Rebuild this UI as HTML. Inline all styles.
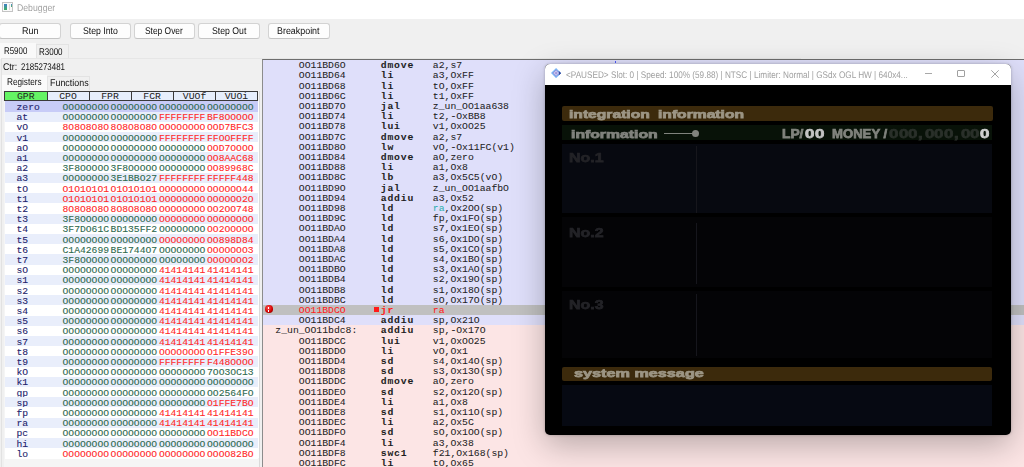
<!DOCTYPE html><html><head><meta charset='utf-8'><style>
*{margin:0;padding:0;box-sizing:border-box}
html,body{width:1024px;height:467px;overflow:hidden;background:#f0f0f0;position:relative}
div,span{position:absolute}
.t{font-family:"Liberation Sans",sans-serif;white-space:pre;transform-origin:0 0;line-height:1}
.m{font-family:"Liberation Mono",monospace;white-space:pre;line-height:1;font-size:9.77px}
.btn{background:#fdfdfd;border:1px solid #d3d3d3;border-bottom-color:#c4c4c4;border-radius:3px;top:22.6px;height:16.3px}
.btn .t{font-size:9.5px;color:#1a1a1a;top:3.6px;left:0;right:0;text-align:center;transform:scaleX(.88);transform-origin:50% 0}
.hc{top:91.2px;height:9.6px;background:#e6eefc;border:1px solid #3a3a3a;border-left:none}
.hc span{left:0;right:0;text-align:center;top:-0.6px;color:#222}
.row{left:4.5px;width:253.5px;height:10.7px}
.g{color:#2f6a50}
.r{color:#ff2a2a}
.nm{color:#24246c;left:12px;top:1.7px}
.rm{font-size:9.7px;-webkit-text-stroke:.1px currentColor}
.cy{position:static;color:#30b0b0}
.dr{left:263px;right:0;height:10.2px}
.dr .m{top:1.3px;color:#1e1e1e;-webkit-text-stroke:.05px currentColor}
.ad{left:35.8px}
.op{left:117.8px;font-weight:bold;letter-spacing:.8px;color:#111;-webkit-text-stroke:.3px currentColor}
.ar{left:169.8px}
.gt{font-family:"Liberation Sans",sans-serif;font-weight:bold;white-space:pre;line-height:1;transform-origin:0 0;-webkit-text-stroke:.75px currentColor;filter:blur(.35px)}
</style></head><body>
<div style='left:0;top:0;width:1024px;height:19px;background:#fff'></div>
<div style='left:2.1px;top:2.1px;width:10.7px;height:9.7px;border:1px solid #c4c4c4;background:#fafafa'><div style='left:0.6px;top:1px;width:3.4px;height:5.7px;background:linear-gradient(#3f7fc8,#3fb060)'></div><div style='left:5.6px;top:1px;width:0.9px;height:5.7px;background:#d8d8d8'></div><div style='left:8px;top:1.4px;width:1.2px;height:2.5px;background:linear-gradient(#4a8ad0,#50b060)'></div></div>
<span class=t style='left:17.3px;top:4px;font-size:9.8px;color:#a4a4a4;text-rendering:geometricPrecision;transform:scaleX(0.8878);'>Debugger</span>
<div class=btn style='left:-1px;width:62.3px'></div>
<div class=btn style='left:69.6px;width:61.80000000000001px'></div>
<div class=btn style='left:133.8px;width:61.69999999999999px'></div>
<div class=btn style='left:198px;width:62px'></div>
<div class=btn style='left:267.6px;width:62.599999999999966px'></div>
<span class=t style='left:22.2px;top:27px;font-size:9.8px;color:#111;text-rendering:geometricPrecision;transform:scaleX(0.9184);'>Run</span>
<span class=t style='left:82.7px;top:27px;font-size:9.8px;color:#111;text-rendering:geometricPrecision;transform:scaleX(0.8878);'>Step Into</span>
<span class=t style='left:145.4px;top:27px;font-size:9.8px;color:#111;text-rendering:geometricPrecision;transform:scaleX(0.8571);'>Step Over</span>
<span class=t style='left:211.5px;top:27px;font-size:9.8px;color:#111;text-rendering:geometricPrecision;transform:scaleX(0.8878);'>Step Out</span>
<span class=t style='left:277.4px;top:27px;font-size:9.8px;color:#111;text-rendering:geometricPrecision;transform:scaleX(0.9082);'>Breakpoint</span>
<div style='left:0;top:42.5px;width:35.5px;height:16px;background:#f9f9f9'></div>
<div style='left:36px;top:43.5px;width:32.5px;height:15px;background:#f0f0f0;border:1px solid #e3e3e3;border-bottom:none'></div>
<div style='left:1.3px;top:58px;width:800px;height:420px;border-left:1px solid #e2e2e2;border-top:1px solid #e6e6e6;background:#f0f0f0'></div>
<span class=t style='left:4.3px;top:46.5px;font-size:9.8px;color:#111;text-rendering:geometricPrecision;transform:scaleX(0.8061);'>R5900</span>
<span class=t style='left:39px;top:47.5px;font-size:9.8px;color:#111;text-rendering:geometricPrecision;transform:scaleX(0.8163);'>R3000</span>
<span class=t style='left:2.9px;top:62.6px;font-size:9.8px;color:#111;text-rendering:geometricPrecision;transform:scaleX(0.8980);'>Ctr:</span>
<span class=t style='left:21px;top:62.6px;font-size:9.8px;color:#111;text-rendering:geometricPrecision;transform:scaleX(0.8061);'>2185273481</span>
<div style='left:2px;top:75px;width:44.5px;height:15.5px;background:#fafafa'></div>
<div style='left:46.5px;top:75.8px;width:43.5px;height:14.7px;background:#f0f0f0;border:1px solid #e3e3e3;border-bottom:none'></div>
<span class=t style='left:7.3px;top:78px;font-size:9.8px;color:#111;text-rendering:geometricPrecision;transform:scaleX(0.8367);'>Registers</span>
<span class=t style='left:50.3px;top:79px;font-size:9.8px;color:#111;text-rendering:geometricPrecision;transform:scaleX(0.9082);'>Functions</span>
<div style='left:4px;top:91px;width:255px;height:376px;background:#f5f5f5'></div>
<div style='left:4.5px;top:101px;width:254px;height:357px;background:#fff'></div>
<div style='left:259.3px;top:91px;width:1px;height:376px;background:#dadada'></div>
<div class=hc style='left:4.0px;width:43.5px;background:#64f464;border-left:1px solid #3a3a3a;'><span class=m>GPR</span></div>
<div class=hc style='left:47.5px;width:42.0px;'><span class=m>CPO</span></div>
<div class=hc style='left:89.5px;width:42.0px;'><span class=m>FPR</span></div>
<div class=hc style='left:131.5px;width:42.30000000000001px;'><span class=m>FCR</span></div>
<div class=hc style='left:173.8px;width:42.5px;'><span class=m>VUOf</span></div>
<div class=hc style='left:216.3px;width:41.30000000000001px;'><span class=m>VUOi</span></div>
<div class=row style='top:101.30px;background:#c8ccf7'><span class='m rm nm'>zero</span><span class='m rm g' style='left:58.0px;top:1.7px'>OOOOOOOO</span><span class='m rm g' style='left:106.1px;top:1.7px'>OOOOOOOO</span><span class='m rm g' style='left:154.4px;top:1.7px'>OOOOOOOO</span><span class='m rm g' style='left:202.5px;top:1.7px'>OOOOOOOO</span></div>
<div class=row style='top:111.50px;background:#e9eefb'><span class='m rm nm'>at</span><span class='m rm g' style='left:58.0px;top:1.7px'>OOOOOOOO</span><span class='m rm g' style='left:106.1px;top:1.7px'>OOOOOOOO</span><span class='m rm r' style='left:154.4px;top:1.7px'>FFFFFFFF</span><span class='m rm r' style='left:202.5px;top:1.7px'>BF8OOOOO</span></div>
<div class=row style='top:121.70px;background:#ffffff'><span class='m rm nm'>vO</span><span class='m rm r' style='left:58.0px;top:1.7px'>8O8O8O8O</span><span class='m rm r' style='left:106.1px;top:1.7px'>8O8O8O8O</span><span class='m rm r' style='left:154.4px;top:1.7px'>OOOOOOOO</span><span class='m rm r' style='left:202.5px;top:1.7px'>OOD7BFC3</span></div>
<div class=row style='top:131.90px;background:#e9eefb'><span class='m rm nm'>v1</span><span class='m rm g' style='left:58.0px;top:1.7px'>OOOOOOOO</span><span class='m rm g' style='left:106.1px;top:1.7px'>OOOOOOOO</span><span class='m rm r' style='left:154.4px;top:1.7px'>FFFFFFFF</span><span class='m rm r' style='left:202.5px;top:1.7px'>FFOOFFFF</span></div>
<div class=row style='top:142.10px;background:#ffffff'><span class='m rm nm'>aO</span><span class='m rm g' style='left:58.0px;top:1.7px'>OOOOOOOO</span><span class='m rm g' style='left:106.1px;top:1.7px'>OOOOOOOO</span><span class='m rm g' style='left:154.4px;top:1.7px'>OOOOOOOO</span><span class='m rm r' style='left:202.5px;top:1.7px'>OOD7OOOO</span></div>
<div class=row style='top:152.30px;background:#e9eefb'><span class='m rm nm'>a1</span><span class='m rm g' style='left:58.0px;top:1.7px'>OOOOOOOO</span><span class='m rm g' style='left:106.1px;top:1.7px'>OOOOOOOO</span><span class='m rm g' style='left:154.4px;top:1.7px'>OOOOOOOO</span><span class='m rm r' style='left:202.5px;top:1.7px'>OO8AAC68</span></div>
<div class=row style='top:162.50px;background:#ffffff'><span class='m rm nm'>a2</span><span class='m rm g' style='left:58.0px;top:1.7px'>3F8OOOOO</span><span class='m rm g' style='left:106.1px;top:1.7px'>3F8OOOOO</span><span class='m rm g' style='left:154.4px;top:1.7px'>OOOOOOOO</span><span class='m rm r' style='left:202.5px;top:1.7px'>OO89968C</span></div>
<div class=row style='top:172.70px;background:#e9eefb'><span class='m rm nm'>a3</span><span class='m rm g' style='left:58.0px;top:1.7px'>OOOOOOOO</span><span class='m rm g' style='left:106.1px;top:1.7px'>3E1BBO27</span><span class='m rm r' style='left:154.4px;top:1.7px'>FFFFFFFF</span><span class='m rm r' style='left:202.5px;top:1.7px'>FFFFF448</span></div>
<div class=row style='top:182.90px;background:#ffffff'><span class='m rm nm'>tO</span><span class='m rm r' style='left:58.0px;top:1.7px'>O1O1O1O1</span><span class='m rm r' style='left:106.1px;top:1.7px'>O1O1O1O1</span><span class='m rm r' style='left:154.4px;top:1.7px'>OOOOOOOO</span><span class='m rm r' style='left:202.5px;top:1.7px'>OOOOOO44</span></div>
<div class=row style='top:193.10px;background:#e9eefb'><span class='m rm nm'>t1</span><span class='m rm r' style='left:58.0px;top:1.7px'>O1O1O1O1</span><span class='m rm r' style='left:106.1px;top:1.7px'>O1O1O1O1</span><span class='m rm r' style='left:154.4px;top:1.7px'>OOOOOOOO</span><span class='m rm r' style='left:202.5px;top:1.7px'>OOOOOO2O</span></div>
<div class=row style='top:203.30px;background:#ffffff'><span class='m rm nm'>t2</span><span class='m rm r' style='left:58.0px;top:1.7px'>8O8O8O8O</span><span class='m rm r' style='left:106.1px;top:1.7px'>8O8O8O8O</span><span class='m rm r' style='left:154.4px;top:1.7px'>OOOOOOOO</span><span class='m rm r' style='left:202.5px;top:1.7px'>OO2OO748</span></div>
<div class=row style='top:213.50px;background:#e9eefb'><span class='m rm nm'>t3</span><span class='m rm g' style='left:58.0px;top:1.7px'>3F8OOOOO</span><span class='m rm g' style='left:106.1px;top:1.7px'>OOOOOOOO</span><span class='m rm r' style='left:154.4px;top:1.7px'>OOOOOOOO</span><span class='m rm r' style='left:202.5px;top:1.7px'>OOOOOOOO</span></div>
<div class=row style='top:223.70px;background:#ffffff'><span class='m rm nm'>t4</span><span class='m rm g' style='left:58.0px;top:1.7px'>3F7DO61C</span><span class='m rm g' style='left:106.1px;top:1.7px'>BD135FF2</span><span class='m rm g' style='left:154.4px;top:1.7px'>OOOOOOOO</span><span class='m rm r' style='left:202.5px;top:1.7px'>OO2OOOOO</span></div>
<div class=row style='top:233.90px;background:#e9eefb'><span class='m rm nm'>t5</span><span class='m rm g' style='left:58.0px;top:1.7px'>OOOOOOOO</span><span class='m rm g' style='left:106.1px;top:1.7px'>OOOOOOOO</span><span class='m rm r' style='left:154.4px;top:1.7px'>OOOOOOOO</span><span class='m rm r' style='left:202.5px;top:1.7px'>OO898D84</span></div>
<div class=row style='top:244.10px;background:#ffffff'><span class='m rm nm'>t6</span><span class='m rm g' style='left:58.0px;top:1.7px'>C1A42699</span><span class='m rm g' style='left:106.1px;top:1.7px'>BE1744O7</span><span class='m rm g' style='left:154.4px;top:1.7px'>OOOOOOOO</span><span class='m rm r' style='left:202.5px;top:1.7px'>OOOOOOO3</span></div>
<div class=row style='top:254.30px;background:#e9eefb'><span class='m rm nm'>t7</span><span class='m rm g' style='left:58.0px;top:1.7px'>3F8OOOOO</span><span class='m rm g' style='left:106.1px;top:1.7px'>OOOOOOOO</span><span class='m rm g' style='left:154.4px;top:1.7px'>OOOOOOOO</span><span class='m rm r' style='left:202.5px;top:1.7px'>OOOOOOO2</span></div>
<div class=row style='top:264.50px;background:#ffffff'><span class='m rm nm'>sO</span><span class='m rm g' style='left:58.0px;top:1.7px'>OOOOOOOO</span><span class='m rm g' style='left:106.1px;top:1.7px'>OOOOOOOO</span><span class='m rm r' style='left:154.4px;top:1.7px'>41414141</span><span class='m rm r' style='left:202.5px;top:1.7px'>41414141</span></div>
<div class=row style='top:274.70px;background:#e9eefb'><span class='m rm nm'>s1</span><span class='m rm g' style='left:58.0px;top:1.7px'>OOOOOOOO</span><span class='m rm g' style='left:106.1px;top:1.7px'>OOOOOOOO</span><span class='m rm r' style='left:154.4px;top:1.7px'>41414141</span><span class='m rm r' style='left:202.5px;top:1.7px'>41414141</span></div>
<div class=row style='top:284.90px;background:#ffffff'><span class='m rm nm'>s2</span><span class='m rm g' style='left:58.0px;top:1.7px'>OOOOOOOO</span><span class='m rm g' style='left:106.1px;top:1.7px'>OOOOOOOO</span><span class='m rm r' style='left:154.4px;top:1.7px'>41414141</span><span class='m rm r' style='left:202.5px;top:1.7px'>41414141</span></div>
<div class=row style='top:295.10px;background:#e9eefb'><span class='m rm nm'>s3</span><span class='m rm g' style='left:58.0px;top:1.7px'>OOOOOOOO</span><span class='m rm g' style='left:106.1px;top:1.7px'>OOOOOOOO</span><span class='m rm r' style='left:154.4px;top:1.7px'>41414141</span><span class='m rm r' style='left:202.5px;top:1.7px'>41414141</span></div>
<div class=row style='top:305.30px;background:#ffffff'><span class='m rm nm'>s4</span><span class='m rm g' style='left:58.0px;top:1.7px'>OOOOOOOO</span><span class='m rm g' style='left:106.1px;top:1.7px'>OOOOOOOO</span><span class='m rm r' style='left:154.4px;top:1.7px'>41414141</span><span class='m rm r' style='left:202.5px;top:1.7px'>41414141</span></div>
<div class=row style='top:315.50px;background:#e9eefb'><span class='m rm nm'>s5</span><span class='m rm g' style='left:58.0px;top:1.7px'>OOOOOOOO</span><span class='m rm g' style='left:106.1px;top:1.7px'>OOOOOOOO</span><span class='m rm r' style='left:154.4px;top:1.7px'>41414141</span><span class='m rm r' style='left:202.5px;top:1.7px'>41414141</span></div>
<div class=row style='top:325.70px;background:#ffffff'><span class='m rm nm'>s6</span><span class='m rm g' style='left:58.0px;top:1.7px'>OOOOOOOO</span><span class='m rm g' style='left:106.1px;top:1.7px'>OOOOOOOO</span><span class='m rm r' style='left:154.4px;top:1.7px'>41414141</span><span class='m rm r' style='left:202.5px;top:1.7px'>41414141</span></div>
<div class=row style='top:335.90px;background:#e9eefb'><span class='m rm nm'>s7</span><span class='m rm g' style='left:58.0px;top:1.7px'>OOOOOOOO</span><span class='m rm g' style='left:106.1px;top:1.7px'>OOOOOOOO</span><span class='m rm r' style='left:154.4px;top:1.7px'>41414141</span><span class='m rm r' style='left:202.5px;top:1.7px'>41414141</span></div>
<div class=row style='top:346.10px;background:#ffffff'><span class='m rm nm'>t8</span><span class='m rm g' style='left:58.0px;top:1.7px'>OOOOOOOO</span><span class='m rm g' style='left:106.1px;top:1.7px'>OOOOOOOO</span><span class='m rm r' style='left:154.4px;top:1.7px'>OOOOOOOO</span><span class='m rm r' style='left:202.5px;top:1.7px'>O1FFE39O</span></div>
<div class=row style='top:356.30px;background:#e9eefb'><span class='m rm nm'>t9</span><span class='m rm g' style='left:58.0px;top:1.7px'>OOOOOOOO</span><span class='m rm g' style='left:106.1px;top:1.7px'>OOOOOOOO</span><span class='m rm r' style='left:154.4px;top:1.7px'>FFFFFFFF</span><span class='m rm r' style='left:202.5px;top:1.7px'>F448OOOO</span></div>
<div class=row style='top:366.50px;background:#ffffff'><span class='m rm nm'>kO</span><span class='m rm g' style='left:58.0px;top:1.7px'>OOOOOOOO</span><span class='m rm g' style='left:106.1px;top:1.7px'>OOOOOOOO</span><span class='m rm g' style='left:154.4px;top:1.7px'>OOOOOOOO</span><span class='m rm g' style='left:202.5px;top:1.7px'>7OO3OC13</span></div>
<div class=row style='top:376.70px;background:#e9eefb'><span class='m rm nm'>k1</span><span class='m rm g' style='left:58.0px;top:1.7px'>OOOOOOOO</span><span class='m rm g' style='left:106.1px;top:1.7px'>OOOOOOOO</span><span class='m rm g' style='left:154.4px;top:1.7px'>OOOOOOOO</span><span class='m rm g' style='left:202.5px;top:1.7px'>OOOOOOOO</span></div>
<div class=row style='top:386.90px;background:#ffffff'><span class='m rm nm'>gp</span><span class='m rm g' style='left:58.0px;top:1.7px'>OOOOOOOO</span><span class='m rm g' style='left:106.1px;top:1.7px'>OOOOOOOO</span><span class='m rm g' style='left:154.4px;top:1.7px'>OOOOOOOO</span><span class='m rm g' style='left:202.5px;top:1.7px'>OO2564FO</span></div>
<div class=row style='top:397.10px;background:#e9eefb'><span class='m rm nm'>sp</span><span class='m rm g' style='left:58.0px;top:1.7px'>OOOOOOOO</span><span class='m rm g' style='left:106.1px;top:1.7px'>OOOOOOOO</span><span class='m rm g' style='left:154.4px;top:1.7px'>OOOOOOOO</span><span class='m rm r' style='left:202.5px;top:1.7px'>O1FFE7BO</span></div>
<div class=row style='top:407.30px;background:#ffffff'><span class='m rm nm'>fp</span><span class='m rm g' style='left:58.0px;top:1.7px'>OOOOOOOO</span><span class='m rm g' style='left:106.1px;top:1.7px'>OOOOOOOO</span><span class='m rm r' style='left:154.4px;top:1.7px'>41414141</span><span class='m rm r' style='left:202.5px;top:1.7px'>41414141</span></div>
<div class=row style='top:417.50px;background:#e9eefb'><span class='m rm nm'>ra</span><span class='m rm g' style='left:58.0px;top:1.7px'>OOOOOOOO</span><span class='m rm g' style='left:106.1px;top:1.7px'>OOOOOOOO</span><span class='m rm r' style='left:154.4px;top:1.7px'>41414141</span><span class='m rm r' style='left:202.5px;top:1.7px'>41414141</span></div>
<div class=row style='top:427.70px;background:#ffffff'><span class='m rm nm'>pc</span><span class='m rm g' style='left:58.0px;top:1.7px'>OOOOOOOO</span><span class='m rm g' style='left:106.1px;top:1.7px'>OOOOOOOO</span><span class='m rm g' style='left:154.4px;top:1.7px'>OOOOOOOO</span><span class='m rm r' style='left:202.5px;top:1.7px'>OO11BDCO</span></div>
<div class=row style='top:437.90px;background:#e9eefb'><span class='m rm nm'>hi</span><span class='m rm g' style='left:58.0px;top:1.7px'>OOOOOOOO</span><span class='m rm g' style='left:106.1px;top:1.7px'>OOOOOOOO</span><span class='m rm g' style='left:154.4px;top:1.7px'>OOOOOOOO</span><span class='m rm g' style='left:202.5px;top:1.7px'>OOOOOOOO</span></div>
<div class=row style='top:448.10px;background:#ffffff'><span class='m rm nm'>lo</span><span class='m rm r' style='left:58.0px;top:1.7px'>OOOOOOOO</span><span class='m rm r' style='left:106.1px;top:1.7px'>OOOOOOOO</span><span class='m rm r' style='left:154.4px;top:1.7px'>OOOOOOOO</span><span class='m rm r' style='left:202.5px;top:1.7px'>OOOO82BO</span></div>
<div style='left:262.3px;top:59px;width:800px;height:420px;border-left:1px solid #8c8c8c;border-top:1px solid #6e6e6e;background:#dfdffa'></div>
<div class=dr style='top:60.00px;background:#dfdffa'><span class='m ad' style=''>OO11BD6O</span><span class='m op'>dmove</span><span class='m ar'>a2,s7</span></div>
<div class=dr style='top:70.20px;background:#dfdffa'><span class='m ad' style=''>OO11BD64</span><span class='m op'>li</span><span class='m ar'>a3,OxFF</span></div>
<div class=dr style='top:80.40px;background:#dfdffa'><span class='m ad' style=''>OO11BD68</span><span class='m op'>li</span><span class='m ar'>tO,OxFF</span></div>
<div class=dr style='top:90.60px;background:#dfdffa'><span class='m ad' style=''>OO11BD6C</span><span class='m op'>li</span><span class='m ar'>t1,OxFF</span></div>
<div class=dr style='top:100.80px;background:#dfdffa'><span class='m ad' style=''>OO11BD7O</span><span class='m op'>jal</span><span class='m ar'>z_un_OO1aa638</span></div>
<div class=dr style='top:111.00px;background:#dfdffa'><span class='m ad' style=''>OO11BD74</span><span class='m op'>li</span><span class='m ar'>t2,-OxBB8</span></div>
<div class=dr style='top:121.20px;background:#dfdffa'><span class='m ad' style=''>OO11BD78</span><span class='m op'>lui</span><span class='m ar'>v1,OxOO25</span></div>
<div class=dr style='top:131.40px;background:#dfdffa'><span class='m ad' style=''>OO11BD7C</span><span class='m op'>dmove</span><span class='m ar'>a2,s7</span></div>
<div class=dr style='top:141.60px;background:#dfdffa'><span class='m ad' style=''>OO11BD8O</span><span class='m op'>lw</span><span class='m ar'>vO,-Ox11FC(v1)</span></div>
<div class=dr style='top:151.80px;background:#dfdffa'><span class='m ad' style=''>OO11BD84</span><span class='m op'>dmove</span><span class='m ar'>aO,zero</span></div>
<div class=dr style='top:162.00px;background:#dfdffa'><span class='m ad' style=''>OO11BD88</span><span class='m op'>li</span><span class='m ar'>a1,Ox8</span></div>
<div class=dr style='top:172.20px;background:#dfdffa'><span class='m ad' style=''>OO11BD8C</span><span class='m op'>lb</span><span class='m ar'>a3,Ox5C5(vO)</span></div>
<div class=dr style='top:182.40px;background:#dfdffa'><span class='m ad' style=''>OO11BD9O</span><span class='m op'>jal</span><span class='m ar'>z_un_OO1aafbO</span></div>
<div class=dr style='top:192.60px;background:#dfdffa'><span class='m ad' style=''>OO11BD94</span><span class='m op'>addiu</span><span class='m ar'>a3,Ox52</span></div>
<div class=dr style='top:202.80px;background:#dfdffa'><span class='m ad' style=''>OO11BD98</span><span class='m op'>ld</span><span class='m ar'><span class=cy>ra</span>,Ox2OO(sp)</span></div>
<div class=dr style='top:213.00px;background:#dfdffa'><span class='m ad' style=''>OO11BD9C</span><span class='m op'>ld</span><span class='m ar'>fp,Ox1FO(sp)</span></div>
<div class=dr style='top:223.20px;background:#dfdffa'><span class='m ad' style=''>OO11BDAO</span><span class='m op'>ld</span><span class='m ar'>s7,Ox1EO(sp)</span></div>
<div class=dr style='top:233.40px;background:#dfdffa'><span class='m ad' style=''>OO11BDA4</span><span class='m op'>ld</span><span class='m ar'>s6,Ox1DO(sp)</span></div>
<div class=dr style='top:243.60px;background:#dfdffa'><span class='m ad' style=''>OO11BDA8</span><span class='m op'>ld</span><span class='m ar'>s5,Ox1CO(sp)</span></div>
<div class=dr style='top:253.80px;background:#dfdffa'><span class='m ad' style=''>OO11BDAC</span><span class='m op'>ld</span><span class='m ar'>s4,Ox1BO(sp)</span></div>
<div class=dr style='top:264.00px;background:#dfdffa'><span class='m ad' style=''>OO11BDBO</span><span class='m op'>ld</span><span class='m ar'>s3,Ox1AO(sp)</span></div>
<div class=dr style='top:274.20px;background:#dfdffa'><span class='m ad' style=''>OO11BDB4</span><span class='m op'>ld</span><span class='m ar'>s2,Ox19O(sp)</span></div>
<div class=dr style='top:284.40px;background:#dfdffa'><span class='m ad' style=''>OO11BDB8</span><span class='m op'>ld</span><span class='m ar'>s1,Ox18O(sp)</span></div>
<div class=dr style='top:294.60px;background:#dfdffa'><span class='m ad' style=''>OO11BDBC</span><span class='m op'>ld</span><span class='m ar'>sO,Ox17O(sp)</span></div>
<div class=dr style='top:304.80px;background:#c0c0c0'><span class='m ad' style='color:#ff2020'>OO11BDCO</span><div style='left:110.7px;top:2.5px;width:5px;height:4.5px;background:#ff1a1a'></div><span class='m op' style='color:#ff2020'>jr</span><span class='m ar' style='color:#ff2020'>ra</span><div style='left:2px;top:0.6px;width:7.6px;height:7.6px;border-radius:50%;background:radial-gradient(circle at 40% 35%,#ff5050,#d00000 60%,#600000)'><div style='left:3.1px;top:1.2px;width:1.3px;height:2.7px;background:#fff'></div><div style='left:3.1px;top:4.9px;width:1.3px;height:1.3px;background:#fff'></div></div></div>
<div class=dr style='top:315.00px;background:#dfdffa'><span class='m ad' style=''>OO11BDC4</span><span class='m op'>addiu</span><span class='m ar'>sp,Ox21O</span></div>
<div class=dr style='top:325.20px;background:#fce5e5'><span class='m ad' style='left:12.3px'>z_un_OO11bdc8:</span><span class='m op'>addiu</span><span class='m ar'>sp,-Ox17O</span></div>
<div class=dr style='top:335.40px;background:#fce5e5'><span class='m ad' style=''>OO11BDCC</span><span class='m op'>lui</span><span class='m ar'>v1,OxOO25</span></div>
<div class=dr style='top:345.60px;background:#fce5e5'><span class='m ad' style=''>OO11BDDO</span><span class='m op'>li</span><span class='m ar'>vO,Ox1</span></div>
<div class=dr style='top:355.80px;background:#fce5e5'><span class='m ad' style=''>OO11BDD4</span><span class='m op'>sd</span><span class='m ar'>s4,Ox14O(sp)</span></div>
<div class=dr style='top:366.00px;background:#fce5e5'><span class='m ad' style=''>OO11BDD8</span><span class='m op'>sd</span><span class='m ar'>s3,Ox13O(sp)</span></div>
<div class=dr style='top:376.20px;background:#fce5e5'><span class='m ad' style=''>OO11BDDC</span><span class='m op'>dmove</span><span class='m ar'>aO,zero</span></div>
<div class=dr style='top:386.40px;background:#fce5e5'><span class='m ad' style=''>OO11BDEO</span><span class='m op'>sd</span><span class='m ar'>s2,Ox12O(sp)</span></div>
<div class=dr style='top:396.60px;background:#fce5e5'><span class='m ad' style=''>OO11BDE4</span><span class='m op'>li</span><span class='m ar'>a1,Ox8</span></div>
<div class=dr style='top:406.80px;background:#fce5e5'><span class='m ad' style=''>OO11BDE8</span><span class='m op'>sd</span><span class='m ar'>s1,Ox11O(sp)</span></div>
<div class=dr style='top:417.00px;background:#fce5e5'><span class='m ad' style=''>OO11BDEC</span><span class='m op'>li</span><span class='m ar'>a2,Ox5C</span></div>
<div class=dr style='top:427.20px;background:#fce5e5'><span class='m ad' style=''>OO11BDFO</span><span class='m op'>sd</span><span class='m ar'>sO,Ox1OO(sp)</span></div>
<div class=dr style='top:437.40px;background:#fce5e5'><span class='m ad' style=''>OO11BDF4</span><span class='m op'>li</span><span class='m ar'>a3,Ox38</span></div>
<div class=dr style='top:447.60px;background:#fce5e5'><span class='m ad' style=''>OO11BDF8</span><span class='m op'>swc1</span><span class='m ar'>f21,Ox168(sp)</span></div>
<div class=dr style='top:457.80px;background:#fce5e5'><span class='m ad' style=''>OO11BDFC</span><span class='m op'>li</span><span class='m ar'>tO,Ox65</span></div>
<div style='left:615px;top:60.5px;width:1px;height:2px;background:#4a5aff'></div>
<div style='left:544.6px;top:63.6px;width:466.8px;height:371.6px;border-radius:5px;background:#000;box-shadow:0 10px 32px rgba(0,0,0,.27),0 0 3px rgba(0,0,0,.25);overflow:hidden'>
<div style='left:0;top:0;width:100%;height:21.5px;background:#fff'></div>
<svg style='position:absolute;left:6.5px;top:4.6px' width='10.2' height='10.2' viewBox='0 0 10 10'><path d='M5 0L10 5L5 10L0 5Z' fill='#7ab8f8'/><path d='M5 1.8L8.2 5L5 8.2L1.8 5Z' fill='#c4c8f0' stroke='#8a80d0' stroke-width='.7'/><path d='M3.6 5L5 3.6L6.4 5L5 6.4Z' fill='#a090d8'/><path d='M7.4 2.6L10 5L7.4 7.4L8.2 5Z' fill='#26348c'/></svg>
<span class=t style='left:21.8px;top:7px;font-size:9.6px;color:#a0a0a0;text-rendering:geometricPrecision;transform:scaleX(.854)'>&lt;PAUSED&gt; Slot: 0 | Speed: 100% (59.88) | NTSC | Limiter: Normal | GSdx OGL HW | 640x4...</span>
<div style='left:380.2px;top:9.6px;width:7.2px;height:1px;background:#a8a8a8'></div>
<div style='left:412.9px;top:6.5px;width:7.3px;height:7.3px;border:1px solid #a0a0a0;border-radius:1px'></div>
<svg style='position:absolute;left:446px;top:6.4px' width='8' height='8' viewBox='0 0 8 8'><path d='M0.3 0.3L7.7 7.7M7.7 0.3L0.3 7.7' stroke='#9a9a9a' stroke-width='0.9'/></svg>
</div>
<div style='left:561.7px;top:106.3px;width:431.10px;height:14.90px;background:#3c2a0c;border-radius:2px'></div>
<span class=gt style='left:569.4px;top:108.8px;font-size:11.5px;color:#9c9584;transform:scaleX(1.36)'>integration</span>
<span class=gt style='left:657.8px;top:108.8px;font-size:11.5px;color:#9c9584;transform:scaleX(1.36)'>information</span>
<div style='left:561.7px;top:124.6px;width:430.80px;height:15.60px;background:#081208;'></div>
<span class=gt style='left:571.4px;top:129.3px;font-size:11.5px;color:#80837d;transform:scaleX(1.37)'>information</span>
<div style='left:664.4px;top:132.5px;width:28.60px;height:1.20px;background:#80837d;'></div>
<div style='left:692px;top:129.5px;width:7.3px;height:7.3px;border-radius:50%;background:#80837d'></div>
<span class=gt style='left:782px;top:127.6px;font-size:12.5px;color:#80837d;transform:scaleX(1.1)'>LP/</span>
<span class=gt style='left:805.3px;top:126.6px;font-size:13.5px;color:#c4c4c4;transform:scaleX(1.25)'>0</span>
<span class=gt style='left:815.3px;top:126.6px;font-size:13.5px;color:#c4c4c4;transform:scaleX(1.25)'>0</span>
<span class=gt style='left:832.1px;top:127.6px;font-size:12.5px;color:#80837d;transform:scaleX(1.05)'>MONEY /</span>
<span class=gt style='left:889.40px;top:126.6px;font-size:13.5px;color:#2a302a;transform:scaleX(1.25)'>0</span>
<span class=gt style='left:898.78px;top:126.6px;font-size:13.5px;color:#2a302a;transform:scaleX(1.25)'>0</span>
<span class=gt style='left:908.16px;top:126.6px;font-size:13.5px;color:#2a302a;transform:scaleX(1.25)'>0</span>
<span class=gt style='left:918.00px;top:126.6px;font-size:13.5px;color:#2a302a;transform:scaleX(1.25)'>,</span>
<span class=gt style='left:925.10px;top:126.6px;font-size:13.5px;color:#2a302a;transform:scaleX(1.25)'>0</span>
<span class=gt style='left:934.48px;top:126.6px;font-size:13.5px;color:#2a302a;transform:scaleX(1.25)'>0</span>
<span class=gt style='left:943.86px;top:126.6px;font-size:13.5px;color:#2a302a;transform:scaleX(1.25)'>0</span>
<span class=gt style='left:953.70px;top:126.6px;font-size:13.5px;color:#2a302a;transform:scaleX(1.25)'>,</span>
<span class=gt style='left:960.90px;top:126.6px;font-size:13.5px;color:#2a302a;transform:scaleX(1.25)'>0</span>
<span class=gt style='left:970.28px;top:126.6px;font-size:13.5px;color:#2a302a;transform:scaleX(1.25)'>0</span>
<span class=gt style='left:979.66px;top:126.6px;font-size:13.5px;color:#d0d0d0;transform:scaleX(1.25)'>0</span>
<div style='left:561.7px;top:143.8px;width:430.80px;height:69.40px;background:#070910;'></div>
<div style='left:561.7px;top:217.1px;width:430.80px;height:69.80px;background:#040406;'></div>
<div style='left:561.7px;top:291.3px;width:430.80px;height:66.70px;background:#040406;'></div>
<div style='left:696px;top:146px;width:1.00px;height:67.00px;background:#16161c;'></div>
<div style='left:696px;top:222.5px;width:1.00px;height:61.00px;background:#16161c;'></div>
<div style='left:696px;top:294px;width:1.00px;height:62.00px;background:#16161c;'></div>
<span class=gt style='left:568.5px;top:151px;font-size:13.5px;color:#232327;transform:scaleX(1.18)'>No.1</span>
<span class=gt style='left:568.5px;top:225.5px;font-size:13.5px;color:#232327;transform:scaleX(1.18)'>No.2</span>
<span class=gt style='left:568.5px;top:297.8px;font-size:13.5px;color:#232327;transform:scaleX(1.18)'>No.3</span>
<div style='left:561.7px;top:366.6px;width:430.80px;height:14.70px;background:#3c2a0c;border-radius:2px'></div>
<span class=gt style='left:573.9px;top:368.2px;font-size:11.5px;color:#9c9584;transform:scaleX(1.41)'>system message</span>
<div style='left:561.7px;top:385px;width:430.80px;height:41.40px;background:#060912;'></div>
</body></html>
